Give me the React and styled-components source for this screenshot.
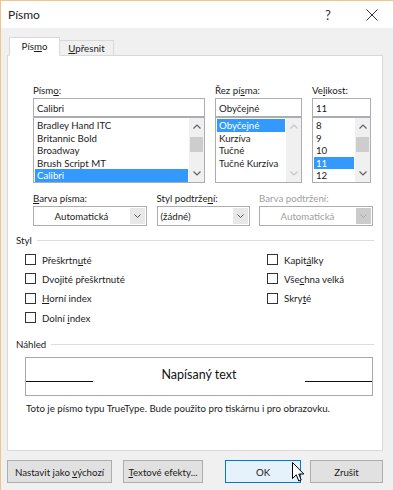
import React from "react";
import styled, { createGlobalStyle } from "styled-components";

const Global = createGlobalStyle`
  html, body { margin: 0; padding: 0; background: #f0f0f0; }
  body { font-family: Lato, "Liberation Sans", sans-serif; }
  * { box-sizing: border-box; }
`;

const Window = styled.div`
  position: relative;
  width: 393px;
  height: 490px;
  background: #f0f0f0;
  border-top: 1px solid #f1c48b;
  border-left: 1px solid #f1c48b;
  display: flex;
  flex-direction: column;
  font-size: 9.7px;
  color: #1b1b1b;
  overflow: hidden;
`;

const TitleBar = styled.div`
  height: 27px;
  background: #fff;
  display: flex;
  align-items: center;
  padding-left: 7px;
`;

const Title = styled.div`
  flex: 1;
  font-size: 12px;
  color: #222;
`;

const TitleBtn = styled.div`
  width: ${(p) => p.$w}px;
  height: 27px;
  display: flex;
  align-items: center;
  justify-content: center;
  font-size: 13px;
  color: #333;
`;

const TabRow = styled.div`
  display: flex;
  align-items: flex-end;
  margin-top: 9px;
  padding-left: 8px;
  position: relative;
  z-index: 1;
`;

const Tab = styled.div`
  height: ${(p) => (p.$active ? 19 : 15)}px;
  width: ${(p) => p.$w}px;
  display: flex;
  align-items: center;
  justify-content: center;
  background: ${(p) => (p.$active ? "#fff" : "#f0f0f0")};
  border: 1px solid #d9d9d9;
  border-bottom: ${(p) => (p.$active ? "1px solid #fff" : "none")};
  margin-left: ${(p) => (p.$active ? 0 : -1)}px;
  margin-bottom: ${(p) => (p.$active ? -1 : 0)}px;
  padding-bottom: ${(p) => (p.$active ? 1 : 0)}px;
`;

const Panel = styled.div`
  height: 396px;
  margin: 0 10px 0 6px;
  background: #fff;
  border: 1px solid #d9d9d9;
  padding: 28px 4px 0 8px;
  display: flex;
  flex-direction: column;
`;

const FieldGrid = styled.div`
  display: grid;
  grid-template-columns: ${(p) => p.$cols};
  column-gap: ${(p) => p.$gap}px;
  margin-left: 17px;
  margin-top: ${(p) => p.$mt || 0}px;
`;

const Field = styled.div`
  display: flex;
  flex-direction: column;
`;

const Label = styled.div`
  height: 13px;
  line-height: 13px;
  margin-bottom: 1px;
  color: ${(p) => (p.$disabled ? "#a0a0a0" : "#1b1b1b")};
  white-space: nowrap;
`;

const Input = styled.div`
  height: 19px;
  border: 1px solid #abadb3;
  padding-left: 3px;
  display: flex;
  align-items: center;
`;

const List = styled.div`
  height: 66px;
  border: 1px solid #abadb3;
  display: flex;
  overflow: hidden;
`;

const Items = styled.div`
  flex: 1;
  padding: 1px 1px 0 1px;
  display: flex;
  flex-direction: column;
`;

const Item = styled.div`
  height: 12.6px;
  flex: none;
  line-height: 12.6px;
  padding-left: 2px;
  background: ${(p) => (p.$sel ? "#3399ff" : "transparent")};
  color: ${(p) => (p.$sel ? "#fff" : "inherit")};
  white-space: nowrap;
`;

const ScrollBar = styled.div`
  width: 15px;
  background: #f0f0f0;
  display: flex;
  flex-direction: column;
  align-items: stretch;
`;

const ScrollArrow = styled.div`
  height: 17px;
  display: flex;
  align-items: center;
  justify-content: center;
`;

const Track = styled.div`
  flex: 1;
  padding: 2px 1px 0 1px;
`;

const Thumb = styled.div`
  height: 15px;
  background: #cdcdcd;
`;

const Select = styled.div`
  height: 20px;
  border: 1px solid #adadad;
  background: #fff;
  display: flex;
  align-items: stretch;
  color: ${(p) => (p.$disabled ? "#a0a0a0" : "#1b1b1b")};
`;

const SelectValue = styled.div`
  flex: 1;
  display: flex;
  align-items: center;
  justify-content: ${(p) => (p.$center ? "center" : "flex-start")};
  padding-left: ${(p) => (p.$center ? 0 : 3)}px;
`;

const SelectArrow = styled.div`
  width: 15px;
  margin: 1px;
  background: ${(p) => (p.$disabled ? "#cccccc" : "#e8e8e8")};
  display: flex;
  align-items: center;
  justify-content: center;
`;

const GroupHead = styled.div`
  display: flex;
  align-items: center;
  height: 12px;
  margin-top: ${(p) => p.$mt}px;
  margin-right: 4px;
  gap: 5px;
`;

const GroupLine = styled.div`
  flex: 1;
  border-top: 1px solid #dcdcdc;
`;

const Checks = styled.div`
  display: grid;
  grid-template-columns: 242px auto;
  margin: 4px 0 0 9px;
`;

const CheckCol = styled.div`
  display: flex;
  flex-direction: column;
`;

const CheckRow = styled.div`
  height: 19.3px;
  display: flex;
  align-items: center;
`;

const Box = styled.div`
  width: 11px;
  height: 11px;
  border: 1px solid #333;
  background: #fff;
  margin-right: 6px;
`;

const Preview = styled.div`
  height: 39px;
  margin: 7px 5px 0 9px;
  border: 1px solid #a9a9a9;
  display: flex;
  align-items: flex-start;
`;

const Rule = styled.div`
  width: 67px;
  margin-top: 23px;
  border-top: 1px solid #111;
`;

const PreviewText = styled.div`
  flex: 1;
  text-align: center;
  font-size: 12.5px;
  line-height: 16px;
  padding-top: 9px;
  color: #111;
`;

const Info = styled.div`
  margin: 6px 0 0 10px;
  line-height: 13px;
`;

const ButtonRow = styled.div`
  display: flex;
  justify-content: space-between;
  margin-top: 9px;
  padding: 0 10px 0 6px;
`;

const ButtonGroup = styled.div`
  display: flex;
  gap: ${(p) => p.$gap}px;
`;

const Button = styled.div`
  width: ${(p) => p.$w}px;
  height: 23px;
  display: flex;
  align-items: center;
  justify-content: center;
  background: ${(p) => (p.$primary ? "#e5f1fb" : "#e1e1e1")};
  border: 1px solid ${(p) => (p.$primary ? "#0078d7" : "#adadad")};
  white-space: nowrap;
`;

const Cursor = styled.svg`
  position: absolute;
  left: 291px;
  top: 461px;
`;

const Chevron = ({ up, color = "#606060" }) => (
  <svg width="8" height="5" viewBox="0 0 8 5">
    <path
      d={up ? "M0.5 4.5 L4 1 L7.5 4.5" : "M0.5 0.5 L4 4 L7.5 0.5"}
      fill="none"
      stroke={color}
      strokeWidth="1.2"
    />
  </svg>
);

const Scroll = ({ disabled, thumb }) => {
  const c = disabled ? "#c6c6c6" : "#606060";
  return (
    <ScrollBar>
      <ScrollArrow>
        <Chevron up color={c} />
      </ScrollArrow>
      <Track>{thumb && <Thumb />}</Track>
      <ScrollArrow>
        <Chevron color={c} />
      </ScrollArrow>
    </ScrollBar>
  );
};

const SmallChevron = ({ color }) => (
  <svg width="7" height="4" viewBox="0 0 7 4">
    <path d="M0.5 0.5 L3.5 3.5 L6.5 0.5" fill="none" stroke={color} strokeWidth="1" />
  </svg>
);

const fonts = ["Bradley Hand ITC", "Britannic Bold", "Broadway", "Brush Script MT", "Calibri"];
const styles = ["Obyčejné", "Kurzíva", "Tučné", "Tučné Kurzíva"];
const sizes = ["8", "9", "10", "11", "12"];

export default function App() {
  return (
    <>
      <Global />
      <Window>
        <TitleBar>
          <Title>Písmo</Title>
          <TitleBtn $w={44}>?</TitleBtn>
          <TitleBtn $w={43}>
            <svg width="12" height="12" viewBox="0 0 12 12">
              <path d="M0.5 0.5 L11.5 11.5 M11.5 0.5 L0.5 11.5" stroke="#333" strokeWidth="1" />
            </svg>
          </TitleBtn>
        </TitleBar>

        <TabRow>
          <Tab $active $w={51}>
            <span>
              Pís<u>m</u>o
            </span>
          </Tab>
          <Tab $w={55}>
            <span>
              <u>U</u>přesnit
            </span>
          </Tab>
        </TabRow>

        <Panel>
          <FieldGrid $cols="172px 87px 59px" $gap={10}>
            <Field>
              <Label>
                Písm<u>o</u>:
              </Label>
              <Input>Calibri</Input>
              <List>
                <Items>
                  {fonts.map((f) => (
                    <Item key={f} $sel={f === "Calibri"}>
                      {f}
                    </Item>
                  ))}
                </Items>
                <Scroll thumb />
              </List>
            </Field>
            <Field>
              <Label>
                Řez pí<u>s</u>ma:
              </Label>
              <Input>Obyčejné</Input>
              <List>
                <Items>
                  {styles.map((s) => (
                    <Item key={s} $sel={s === "Obyčejné"}>
                      {s}
                    </Item>
                  ))}
                </Items>
                <Scroll disabled />
              </List>
            </Field>
            <Field>
              <Label>
                Ve<u>l</u>ikost:
              </Label>
              <Input>11</Input>
              <List>
                <Items>
                  {sizes.map((s) => (
                    <Item key={s} $sel={s === "11"}>
                      {s}
                    </Item>
                  ))}
                </Items>
                <Scroll thumb />
              </List>
            </Field>
          </FieldGrid>

          <FieldGrid $cols="114px 93px 114px" $gap={9.5} $mt={9}>
            <Field>
              <Label>
                <u>B</u>arva písma:
              </Label>
              <Select>
                <SelectValue $center>Automatická</SelectValue>
                <SelectArrow>
                  <SmallChevron color="#555" />
                </SelectArrow>
              </Select>
            </Field>
            <Field>
              <Label>
                Styl podtrže<u>n</u>í:
              </Label>
              <Select>
                <SelectValue>(žádné)</SelectValue>
                <SelectArrow>
                  <SmallChevron color="#555" />
                </SelectArrow>
              </Select>
            </Field>
            <Field>
              <Label $disabled>Barva podtržení:</Label>
              <Select $disabled>
                <SelectValue $center>Automatická</SelectValue>
                <SelectArrow $disabled>
                  <SmallChevron color="#a8a8a8" />
                </SelectArrow>
              </Select>
            </Field>
          </FieldGrid>

          <GroupHead $mt={8}>
            <span>Styl</span>
            <GroupLine />
          </GroupHead>
          <Checks>
            <CheckCol>
              <CheckRow>
                <Box />
                <span>
                  Přeškrtn<u>u</u>té
                </span>
              </CheckRow>
              <CheckRow>
                <Box />
                <span>Dvojité přeškrtnuté</span>
              </CheckRow>
              <CheckRow>
                <Box />
                <span>
                  <u>H</u>orní index
                </span>
              </CheckRow>
              <CheckRow>
                <Box />
                <span>
                  Dolní <u>i</u>ndex
                </span>
              </CheckRow>
            </CheckCol>
            <CheckCol>
              <CheckRow>
                <Box />
                <span>
                  Kapit<u>á</u>lky
                </span>
              </CheckRow>
              <CheckRow>
                <Box />
                <span>
                  Vše<u>c</u>hna velká
                </span>
              </CheckRow>
              <CheckRow>
                <Box />
                <span>
                  Skry<u>t</u>é
                </span>
              </CheckRow>
            </CheckCol>
          </Checks>

          <GroupHead $mt={11}>
            <span>Náhled</span>
            <GroupLine />
          </GroupHead>
          <Preview>
            <Rule />
            <PreviewText>Napísaný text</PreviewText>
            <Rule />
          </Preview>
          <Info>Toto je písmo typu TrueType. Bude použito pro tiskárnu i pro obrazovku.</Info>
        </Panel>

        <ButtonRow>
          <ButtonGroup $gap={11}>
            <Button $w={105}>
              <span>
                Nastavit jako <u>v</u>ýchozí
              </span>
            </Button>
            <Button $w={80}>
              <span>
                <u>T</u>extové efekty...
              </span>
            </Button>
          </ButtonGroup>
          <ButtonGroup $gap={9}>
            <Button $w={76} $primary>
              OK
            </Button>
            <Button $w={73}>Zrušit</Button>
          </ButtonGroup>
        </ButtonRow>

        <Cursor width="13" height="21" viewBox="0 0 13 21">
          <path
            d="M0.5 0.5 L0.5 16.5 L4.3 12.8 L6.8 19 L9.2 18 L6.8 12 L11.8 12 Z"
            fill="#fff"
            stroke="#000"
            strokeWidth="1"
            strokeLinejoin="miter"
          />
        </Cursor>
      </Window>
    </>
  );
}
